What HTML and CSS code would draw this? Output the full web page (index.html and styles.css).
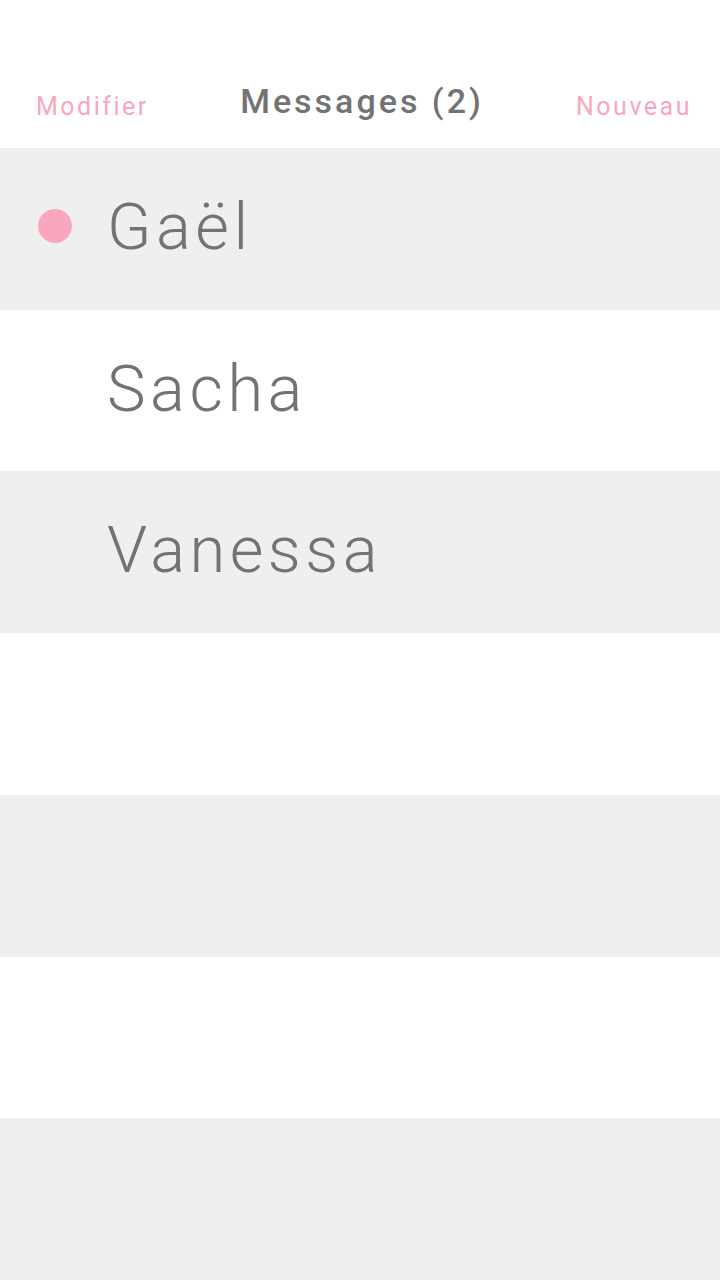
FILE: index.html
```html
<!DOCTYPE html>
<html lang="fr">
<head>
<meta charset="utf-8">
<link rel="stylesheet" href="styles.css">
</head>
<body>
<div class="app">
  <header class="header">
    <span class="action left">Modifier</span>
    <h1 class="title">Messages (2)</h1>
    <span class="action right">Nouveau</span>
  </header>
  <ul class="list">
    <li class="row alt"><span class="dot"></span><span class="name">Gaël</span></li>
    <li class="row"><span class="spacer"></span><span class="name">Sacha</span></li>
    <li class="row alt"><span class="spacer"></span><span class="name">Vanessa</span></li>
    <li class="row"></li>
    <li class="row alt"></li>
    <li class="row"></li>
    <li class="row alt"></li>
  </ul>
</div>
</body>
</html>
```
FILE: styles.css
```css
* { box-sizing: border-box; }
html, body { margin: 0; padding: 0; }
body { font-family: Roboto, "Noto Sans", sans-serif; background: #fff; }
.app { width: 720px; height: 1280px; display: flex; flex-direction: column; }
.header {
  height: 148px;
  display: grid;
  grid-template-columns: 1fr auto 1fr;
  align-items: end;
  padding: 0 28px 27px 36px;
}
.action { color: #fba6bc; font-size: 25px; font-weight: 400; letter-spacing: 2.5px; line-height: 28px; }
.left { justify-self: start; }
.right { justify-self: end; }
.title {
  margin: 0 4px 0 0;
  color: #737373;
  font-size: 34px;
  font-weight: 500;
  letter-spacing: 3px;
  line-height: 40px;
}
.list { list-style: none; margin: 0; padding: 0; flex: 1; display: flex; flex-direction: column; }
.row { flex: 1; display: flex; align-items: center; padding: 0 0 4px 38px; background: #fff; }
.row.alt { background: #efefef; }
.dot { width: 34px; height: 34px; border-radius: 50%; background: #fba6bc; margin-bottom: 2px; }
.spacer { width: 34px; }
.name {
  margin-left: 35px;
  color: #737373;
  font-size: 65px;
  font-weight: 300;
  letter-spacing: 4.5px;
  line-height: 76px;
}
```
